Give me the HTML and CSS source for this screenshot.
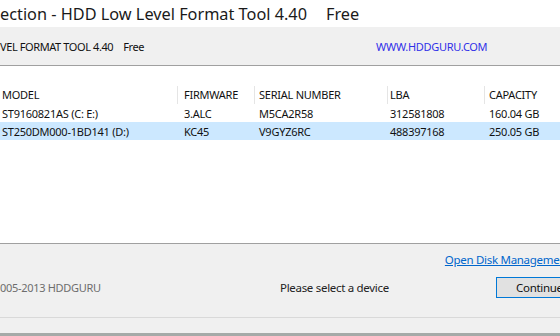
FILE: index.html
```html
<!DOCTYPE html>
<html>
<head>
    <meta charset="utf-8"/>
    <title>HDD Low Level Format Tool 4.40</title>
    <link rel="stylesheet" href="styles.css">
</head>
<body>
    <div class="window">
        <!-- 제목 표시줄 -->
        <div class="title-bar">
            <span class="title-text">ection - HDD Low Level Format Tool 4.40</span>
            <span class="title-free">Free</span>
        </div>

        <!-- 상단 배너 -->
        <div class="banner">
            <span class="banner-name">VEL FORMAT TOOL 4.40</span>
            <span class="banner-free">Free</span>
            <span class="banner-site">WWW.HDDGURU.COM</span>
        </div>

        <!-- 장치 목록 -->
        <div class="device-list">
            <div class="list-row list-head">
                <div class="cell c-model">MODEL</div>
                <div class="cell c-fw">FIRMWARE</div>
                <div class="cell c-serial">SERIAL NUMBER</div>
                <div class="cell c-lba">LBA</div>
                <div class="cell c-cap">CAPACITY</div>
            </div>
            <div class="list-row">
                <div class="cell c-model">ST9160821AS (C: E:)</div>
                <div class="cell c-fw">3.ALC</div>
                <div class="cell c-serial">M5CA2R58</div>
                <div class="cell c-lba">312581808</div>
                <div class="cell c-cap">160.04 GB</div>
            </div>
            <div class="list-row selected">
                <div class="cell c-model">ST250DM000-1BD141 (D:)</div>
                <div class="cell c-fw">KC45</div>
                <div class="cell c-serial">V9GYZ6RC</div>
                <div class="cell c-lba">488397168</div>
                <div class="cell c-cap">250.05 GB</div>
            </div>
        </div>

        <!-- 하단 패널 -->
        <div class="footer">
            <div class="footer-top">
                <a class="disk-link" href="#">Open Disk Management</a>
            </div>
            <div class="footer-main">
                <span class="copyright">005-2013 HDDGURU</span>
                <span class="status">Please select a device</span>
                <button class="continue-btn">Continue &gt;&gt;</button>
            </div>
        </div>
        <div class="status-strip"></div>
        <div class="bottom-edge"></div>
    </div>
</body>
</html>
```

FILE: styles.css
```css
body {
    margin: 0;
    font-family: "Noto Sans", "Open Sans", sans-serif;
    background-color: #fff;
}
.window {
    width: 560px;
    height: 336px;
    overflow: hidden;
    display: flex;
    flex-direction: column;
}

/* 제목 표시줄 */
.title-bar {
    height: 27px;
    flex-shrink: 0;
    display: flex;
    align-items: center;
    white-space: nowrap;
    font-size: 16.3px;
    color: #1a1a1a;
    background-color: #fff;
}
.title-free {
    margin-left: 19px;
}

/* 상단 배너 */
.banner {
    height: 38px;
    flex-shrink: 0;
    display: flex;
    align-items: center;
    font-size: 11px;
    letter-spacing: -0.4px;
    color: #111;
    background-color: #f0f0f0;
    border-bottom: 1px solid #a0a0a0;
    white-space: nowrap;
}
.banner-free {
    margin-left: 10px;
}
.banner-site {
    margin-left: 232px;
    letter-spacing: -0.3px;
    color: #3030e8;
}

/* 장치 목록 */
.device-list {
    flex: 1;
    padding-top: 20px;
    background-color: #fff;
    font-size: 11px;
    letter-spacing: -0.25px;
    color: #111;
    border-bottom: 1px solid #a0a0a0;
}
.list-row {
    display: grid;
    grid-template-columns: 178px 77px 133px 97px 1fr;
    height: 18px;
    align-items: center;
    white-space: nowrap;
}
.list-head .cell {
    border-right: 1px solid #e5e5e5;
    height: 18px;
    line-height: 18px;
}
.list-head .c-cap {
    border-right: none;
}
.list-row.selected {
    background-color: #cce8ff;
}
.cell {
    padding-left: 6px;
    overflow: hidden;
}
.c-model {
    padding-left: 2px;
}
.c-serial {
    padding-left: 4px;
}
.c-lba {
    padding-left: 2px;
}
.c-cap {
    padding-left: 4px;
}

/* 하단 패널 */
.footer {
    height: 73px;
    flex-shrink: 0;
    background-color: #f0f0f0;
    font-size: 11.5px;
    letter-spacing: -0.3px;
}
.footer-top {
    height: 31px;
    display: flex;
    align-items: center;
    justify-content: flex-end;
}
.disk-link {
    margin-right: -10px;
    color: #0066cc;
    white-space: nowrap;
}
.footer-main {
    display: flex;
    align-items: center;
    height: 24px;
    white-space: nowrap;
}
.copyright {
    width: 280px;
    flex-shrink: 0;
    color: #6d6d6d;
    font-size: 11px;
}
.status {
    width: 216px;
    flex-shrink: 0;
    color: #222;
}
.continue-btn {
    width: 90px;
    height: 21px;
    flex-shrink: 0;
    padding: 0 0 0 19px;
    text-align: left;
    font-family: inherit;
    font-size: 11.5px;
    letter-spacing: -0.3px;
    color: #111;
    background-color: #e1e1e1;
    border: 1px solid #0078d7;
    box-shadow: inset 0 0 0 1px #e1e1e1;
}
.status-strip {
    height: 15px;
    flex-shrink: 0;
    background-color: #f0f0f0;
    border-top: 1px solid #d9d9d9;
}
.bottom-edge {
    height: 3px;
    flex-shrink: 0;
    background-color: #a5aaa8;
}
```
